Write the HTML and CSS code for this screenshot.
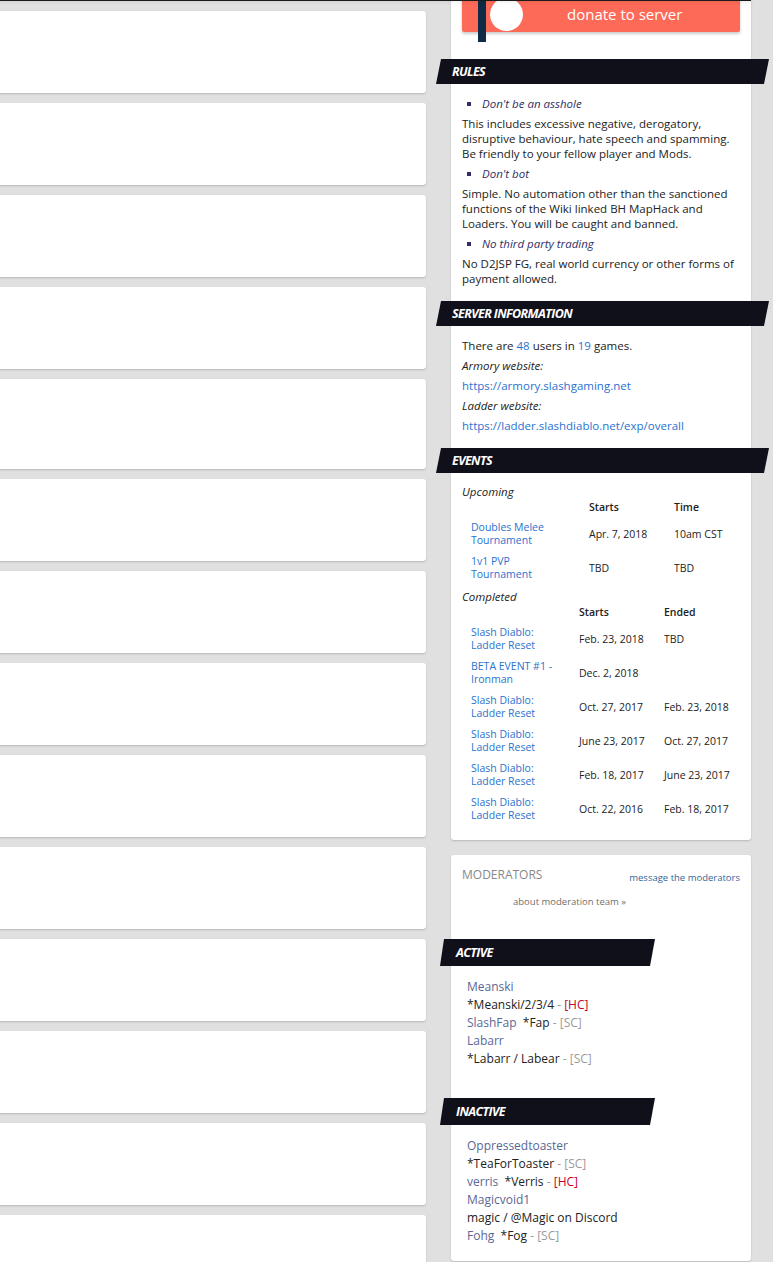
FILE: index.html
```html
<!DOCTYPE html>
<html lang="en">
<head>
  <meta charset="UTF-8" />
  <title>Slash Diablo</title>
  <link rel="stylesheet" href="styles.css">
</head>
<body>

  <div class="topline"></div>

  <div class="page">

    <!-- Post list -->
    <div class="feed">
      <div class="card"></div>
      <div class="card"></div>
      <div class="card"></div>
      <div class="card"></div>
      <div class="card tall"></div>
      <div class="card"></div>
      <div class="card"></div>
      <div class="card"></div>
      <div class="card"></div>
      <div class="card"></div>
      <div class="card"></div>
      <div class="card"></div>
      <div class="card"></div>
      <div class="card"></div>
    </div>

    <!-- Sidebar -->
    <div class="side">
      <div class="panel info">
        <a class="donate" href="#">
          <span class="cord"></span>
          <span class="knob"></span>
          <span class="donate-text">donate to server</span>
        </a>

        <h3 class="bar">RULES</h3>
        <ul class="rules">
          <li>Don't be an asshole</li>
        </ul>
        <p>This includes excessive negative, derogatory, disruptive behaviour, hate speech and spamming. Be friendly to your fellow player and Mods.</p>
        <ul class="rules">
          <li>Don't bot</li>
        </ul>
        <p>Simple. No automation other than the sanctioned functions of the Wiki linked BH MapHack and Loaders. You will be caught and banned.</p>
        <ul class="rules">
          <li>No third party trading</li>
        </ul>
        <p>No D2JSP FG, real world currency or other forms of payment allowed.</p>

        <h3 class="bar">SERVER INFORMATION</h3>
        <div class="server">
          <p>There are <a href="#">48</a> users in <a href="#">19</a> games.</p>
          <p><em>Armory website:</em></p>
          <p><a href="#">https://armory.slashgaming.net</a></p>
          <p><em>Ladder website:</em></p>
          <p><a href="#">https://ladder.slashdiablo.net/exp/overall</a></p>
        </div>

        <h3 class="bar">EVENTS</h3>
        <div class="events">
          <div class="ev-label">Upcoming</div>
          <table class="ev up">
            <colgroup><col class="c-name"><col class="c-date"><col></colgroup>
            <thead>
              <tr><th></th><th>Starts</th><th>Time</th></tr>
            </thead>
            <tbody>
              <tr><td><a href="#">Doubles Melee Tournament</a></td><td>Apr. 7, 2018</td><td>10am CST</td></tr>
              <tr><td><a href="#">1v1 PVP Tournament</a></td><td>TBD</td><td>TBD</td></tr>
            </tbody>
          </table>

          <div class="ev-label done">Completed</div>
          <table class="ev past">
            <colgroup><col class="c-name"><col class="c-date"><col></colgroup>
            <thead>
              <tr><th></th><th>Starts</th><th>Ended</th></tr>
            </thead>
            <tbody>
              <tr><td><a href="#">Slash Diablo: Ladder Reset</a></td><td>Feb. 23, 2018</td><td>TBD</td></tr>
              <tr><td><a href="#">BETA EVENT #1 - Ironman</a></td><td>Dec. 2, 2018</td><td></td></tr>
              <tr><td><a href="#">Slash Diablo: Ladder Reset</a></td><td>Oct. 27, 2017</td><td>Feb. 23, 2018</td></tr>
              <tr><td><a href="#">Slash Diablo: Ladder Reset</a></td><td>June 23, 2017</td><td>Oct. 27, 2017</td></tr>
              <tr><td><a href="#">Slash Diablo: Ladder Reset</a></td><td>Feb. 18, 2017</td><td>June 23, 2017</td></tr>
              <tr><td><a href="#">Slash Diablo: Ladder Reset</a></td><td>Oct. 22, 2016</td><td>Feb. 18, 2017</td></tr>
            </tbody>
          </table>
        </div>
      </div>

      <div class="panel mods">
        <div class="mods-head">
          <span class="mods-title">MODERATORS</span>
          <a class="mods-msg" href="#">message the moderators</a>
        </div>
        <a class="mods-about" href="#">about moderation team »</a>

        <h3 class="bar small">ACTIVE</h3>
        <div class="mod-list">
          <div><a href="#">Meanski</a></div>
          <div>*Meanski/2/3/4 <span class="dash">-</span> <span class="hc">[HC]</span></div>
          <div><a href="#">SlashFap</a>&nbsp; *Fap <span class="dash">-</span> <span class="sc">[SC]</span></div>
          <div><a href="#">Labarr</a></div>
          <div>*Labarr / Labear <span class="dash">-</span> <span class="sc">[SC]</span></div>
        </div>

        <h3 class="bar small">INACTIVE</h3>
        <div class="mod-list">
          <div><a href="#">Oppressedtoaster</a></div>
          <div>*TeaForToaster <span class="dash">-</span> <span class="sc">[SC]</span></div>
          <div><a href="#">verris</a>&nbsp; *Verris <span class="dash">-</span> <span class="hc">[HC]</span></div>
          <div><a href="#">Magicvoid1</a></div>
          <div>magic / @Magic on Discord</div>
          <div><a href="#">Fohg</a>&nbsp; *Fog <span class="dash">-</span> <span class="sc">[SC]</span></div>
        </div>
      </div>
    </div>

  </div>

</body>
</html>
```

FILE: styles.css
```css
body {
  margin: 0;
  padding: 0;
  background: #e0e0e0;
  font-family: 'Open Sans', sans-serif;
  color: #222;
  overflow: hidden;
}

a {
  text-decoration: none;
}

/* header edge */
.topline {
  position: absolute;
  top: 0;
  left: 0;
  width: 751px;
  height: 1px;
  background: #1a1a1a;
  box-shadow: 0 1px 3px rgba(0, 0, 0, 0.15);
  z-index: 10;
}

.page {
  display: flex;
  align-items: flex-start;
  gap: 25px;
  padding-top: 11px;
}

/* Posts */
.feed {
  width: 436px;
  margin-left: -10px;
  display: flex;
  flex-direction: column;
  gap: 10px;
}

.card {
  height: 82px;
  background: #fff;
  border-radius: 3px;
  box-shadow: 0 1px 2px rgba(0, 0, 0, 0.18);
}

.card.tall {
  height: 90px;
}

/* Sidebar */
.side {
  width: 300px;
  display: flex;
  flex-direction: column;
  gap: 15px;
}

.panel {
  background: #fff;
  border-radius: 3px;
  box-shadow: 0 1px 2px rgba(0, 0, 0, 0.18);
  padding: 0 11px;
}

.panel.info {
  margin-top: -26px;
  padding-top: 11px;
  padding-bottom: 14px;
}

.donate {
  position: relative;
  display: flex;
  align-items: center;
  height: 36px;
  background: #fd6a57;
  color: #fff;
  border-radius: 2px;
  box-shadow: 0 2px 3px rgba(0, 0, 0, 0.2);
}

.cord {
  position: absolute;
  left: 16px;
  top: -10px;
  width: 8px;
  height: 56px;
  background: #0f2b45;
}

.knob {
  width: 33px;
  height: 33px;
  margin-left: 28px;
  border-radius: 50%;
  background: #fff;
}

.donate-text {
  margin-left: 44px;
  font-size: 15px;
}

/* section bars */
.bar {
  margin: 27px -29px 0 -26px;
  height: 25px;
  line-height: 25px;
  padding-left: 16px;
  background: #10101b;
  color: #fff;
  font-size: 12.5px;
  font-weight: 700;
  font-style: italic;
  letter-spacing: -0.6px;
  clip-path: polygon(5px 0, 100% 0, calc(100% - 5px) 100%, 0 100%);
}

.bar.small {
  box-sizing: border-box;
  margin: 31px 0 0 -22px;
  width: 215px;
  height: 27px;
  line-height: 27px;
  padding-left: 16px;
  clip-path: polygon(4px 0, 100% 0, calc(100% - 5px) 100%, 0 100%);
}

.mod-list + .bar.small {
  margin-top: 30px;
}

/* rules */
.info p {
  font-size: 11.5px;
  line-height: 15px;
  margin: 5px 0;
}

.rules {
  margin: 5px 0;
  padding-left: 20px;
  list-style: square;
  color: #2f2f64;
  font-size: 11.5px;
  line-height: 15px;
  font-style: italic;
}

.bar + .rules {
  margin-top: 12px;
}

.info p + .bar {
  margin-top: 15px;
}

/* server information */
.server {
  margin-top: 12px;
}

.server a {
  color: #2a72cf;
}

.info .server + .bar {
  margin-top: 15px;
}

/* events */
.events {
  padding-top: 11px;
}

.ev-label {
  font-size: 11.5px;
  line-height: 15px;
  font-style: italic;
}

.ev-label.done {
  margin-top: 4px;
}

.ev {
  width: 100%;
  border-collapse: collapse;
  table-layout: fixed;
  font-size: 10.5px;
}

.ev th {
  text-align: left;
  font-weight: 600;
  line-height: 13px;
  padding: 2px 0 3px;
}

.ev td {
  line-height: 13px;
  height: 26px;
  padding: 4px 0;
  vertical-align: middle;
}

.ev td:first-child {
  padding-left: 9px;
  padding-right: 20px;
}

.ev a {
  color: #2a72cf;
}

.up .c-name { width: 127px; }
.up .c-date { width: 85px; }
.past .c-name { width: 117px; }
.past .c-date { width: 85px; }

/* moderators */
.panel.mods {
  padding-top: 11px;
  padding-bottom: 16px;
}

.mods-head {
  display: flex;
  justify-content: space-between;
  align-items: flex-start;
}

.mods-title {
  font-size: 12px;
  color: #888;
}

.mods-msg {
  padding-top: 5px;
  font-size: 9.5px;
  color: #336699;
}

.mods-about {
  display: block;
  margin: 11px 0 0 51px;
  font-size: 9.5px;
  color: #6f6f6f;
}

.mod-list {
  padding: 12px 0 0 5px;
  font-size: 12px;
  line-height: 18px;
}

.mod-list a {
  color: #5a6796;
}

.dash,
.sc {
  color: #9a9a9a;
}

.hc {
  color: #c4002c;
}
```
